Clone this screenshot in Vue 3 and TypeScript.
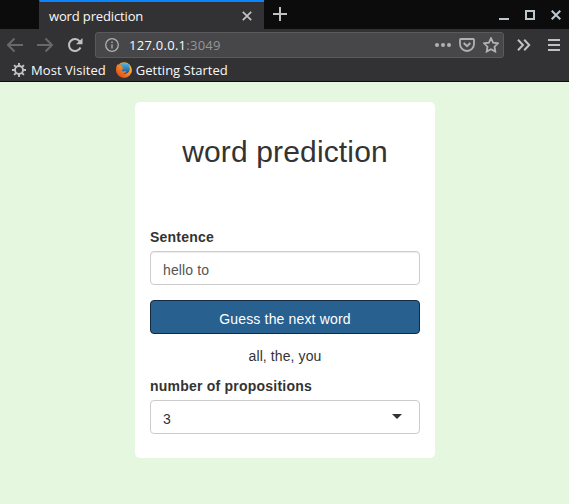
<script setup lang="ts">
import { ref } from 'vue'

const title = 'word prediction'
const sentence = ref('hello to')
const predictions = ref(['all', 'the', 'you'])
const count = ref(3)
</script>

<template>
  <div class="window">
    <header class="chrome">
      <div class="tabbar">
        <div class="tab">
          <span class="tab-title">{{ title }}</span>
          <svg class="tab-close" width="10" height="10" viewBox="0 0 10 10"><path d="M.8.8 9.2 9.2M9.2.8.8 9.2" /></svg>
        </div>
        <svg class="new-tab" width="14" height="14" viewBox="0 0 14 14"><path d="M7 0v14M0 7h14" /></svg>
        <div class="controls">
          <svg width="10" height="10" viewBox="0 0 10 10"><path d="M0 9h10" /></svg>
          <svg width="10" height="10" viewBox="0 0 10 10"><path d="M1 1h8v8H1z" /></svg>
          <svg width="10" height="10" viewBox="0 0 10 10"><path d="M.7.7 9.3 9.3M9.3.7.7 9.3" /></svg>
        </div>
      </div>
      <div class="toolbar">
        <svg class="nav dim" width="16" height="16" viewBox="0 0 16 16"><path d="M16 8H1M7.500 1.500 1 8l6.500 6.500" /></svg>
        <svg class="nav dim forward" width="16" height="16" viewBox="0 0 16 16"><path d="M0 8h15M8.500 1.500 15 8l-6.500 6.500" /></svg>
        <svg class="nav reload" width="16" height="16" viewBox="0 0 16 16">
          <path d="M12.700 4.300A6 6 0 1 0 13.500 10.500" /><path class="solid" d="M15.500 1v6.200H9z" />
        </svg>
        <div class="urlbar">
          <svg class="info" width="14" height="14" viewBox="0 0 14 14">
            <circle cx="7" cy="7" r="6.300" /><path d="M7 6.200v4.300M7 3.400v1.700" />
          </svg>
          <span class="url">127.0.0.1<span class="port">:3049</span></span>
          <svg class="dots" width="16" height="4" viewBox="0 0 16 4"><circle cx="2" cy="2" r="2" /><circle cx="8" cy="2" r="2" /><circle cx="14" cy="2" r="2" /></svg>
          <svg class="pocket" width="16" height="14" viewBox="0 0 16 14"><path d="M1.800 1h12.400q.8 0 .8.800V6a7 7 0 0 1-14 0V1.800Q1 1 1.800 1z" /><path class="thick" d="m4.700 5 3.300 3.200L11.300 5" /></svg>
          <svg class="star" width="16" height="16" viewBox="0 0 16 16"><path d="m8 1.200 2.100 4.400 4.900.7-3.500 3.400.8 4.900L8 12.300l-4.300 2.300.8-4.900L1 6.300l4.900-.7z" /></svg>
        </div>
        <svg class="overflow" width="14" height="12" viewBox="0 0 14 12"><path d="m1 .8 5 5.200-5 5.200M7.200.8l5 5.200-5 5.200" /></svg>
        <svg class="menu" width="12" height="12" viewBox="0 0 12 12"><path d="M0 1h12M0 6h12M0 11h12" /></svg>
      </div>
      <div class="bookmarks">
        <svg class="gear" width="14" height="14" viewBox="0 0 14 14">
          <circle cx="7" cy="7" r="4" />
          <path d="M7 0v3M7 11v3M0 7h3M11 7h3M2.050 2.050l2.100 2.100M9.850 9.850l2.100 2.100M2.050 11.950l2.100-2.100M9.850 4.150l2.100-2.100" />
        </svg>
        <span class="most">Most Visited</span>
        <svg class="firefox" width="16" height="16" viewBox="0 0 16 16">
          <defs>
            <linearGradient id="flame" x1="1" y1="0" x2="0" y2="1"><stop offset="0" stop-color="#ffd64a" /><stop offset=".45" stop-color="#f58a22" /><stop offset="1" stop-color="#d93620" /></linearGradient>
            <linearGradient id="globe" x1="0" y1="0" x2="0" y2="1"><stop offset="0" stop-color="#56b9e9" /><stop offset="1" stop-color="#174f93" /></linearGradient>
          </defs>
          <circle cx="8" cy="8" r="7.700" fill="url(#flame)" />
          <circle cx="8.700" cy="6.300" r="5.600" fill="url(#globe)" />
          <path d="M1.200 2.300 3.500 4q1.500-.6 3 .3L5.800 6l1.700.5-2 1.600q.8 2 3 1.100l2 .1q-1.300 2.500-4.500 1.700 4.800 2.500 7.300-1.500 1.300-3-.6-6.500Q17 6 15.200 10.900 12 16.500 6 15.300-1.500 12.500.4 5z" fill="url(#flame)" />
        </svg>
        <span class="started">Getting Started</span>
      </div>
    </header>

    <main class="page">
      <form class="card" @submit.prevent>
        <h2>{{ title }}</h2>
        <label class="short" for="sentence">Sentence</label>
        <input id="sentence" v-model="sentence" class="control" type="text" />
        <button class="guess" type="submit">Guess the next word</button>
        <div class="result">{{ predictions.join(', ') }}</div>
        <label>number of propositions</label>
        <div class="control select"><span>{{ count }}</span><i class="caret"></i></div>
      </form>
    </main>
  </div>
</template>

<style>
body {
  margin: 0;
  overflow: hidden;
}
</style>

<style scoped>
* {
  box-sizing: border-box;
}
.window {
  width: 569px;
  height: 504px;
  display: flex;
  flex-direction: column;
}
svg {
  display: block;
  flex: none;
  fill: none;
  stroke: #c1c1c2;
  stroke-width: 2;
}
.chrome {
  height: 82px;
  background: #323234;
  border-bottom: 1px solid #0c0c0d;
  color: #f9f9fa;
  font: 13px/18px "Open Sans", "Noto Sans", sans-serif;
  white-space: nowrap;
}
.tabbar {
  height: 29px;
  background: #0c0c0d;
  display: flex;
  padding-left: 39px;
}
.tab {
  width: 225px;
  height: 29px;
  display: flex;
  align-items: center;
  justify-content: space-between;
  padding: 0 12px 0 9px;
  border-top: 2px solid #0a84ff;
  border-left: 1px solid #343436;
  background: #323234;
}
.tab-title {
  letter-spacing: -0.14px;
}
.tab-close {
  margin-top: 1px;
  stroke-width: 1.800;
}
.new-tab {
  margin: 7px 0 0 9px;
}
.controls {
  display: flex;
  gap: 16px;
  margin: 10px 8px 0 auto;
}
.controls svg {
  stroke: #bcc8ce;
}
.toolbar {
  height: 32px;
  display: flex;
  align-items: center;
}
.nav {
  margin-left: 7px;
}
.dim {
  stroke: #68686a;
}
.forward {
  margin-left: 14px;
}
.reload {
  margin-left: 14px;
}
.solid {
  fill: #c1c1c2;
  stroke: none;
}
.urlbar {
  width: 409px;
  height: 26px;
  margin-left: 12px;
  padding: 0 4px 0 9px;
  display: flex;
  align-items: center;
  border: 1px solid #5a5a5c;
  border-radius: 3px;
  background: #474749;
}
.info {
  stroke-width: 1.300;
  stroke: #b1b1b3;
}
.url {
  margin-left: 10px;
  letter-spacing: 0.27px;
}
.port {
  color: #959597;
}
.dots {
  margin-left: auto;
  fill: #b1b1b3;
  stroke: none;
}
.pocket {
  margin-left: 8px;
  stroke-width: 1.800;
  stroke: #b1b1b3;
}
.thick {
  stroke-width: 2;
}
.star {
  margin-left: 8px;
  stroke-width: 1.800;
  stroke: #b1b1b3;
}
.overflow {
  margin-left: 13px;
}
.menu {
  margin-left: 17px;
}
.bookmarks {
  height: 18px;
  display: flex;
  align-items: center;
  padding-left: 12px;
}
.gear {
  stroke-width: 1.900;
}
.most {
  margin-left: 5px;
  letter-spacing: 0.06px;
}
.firefox {
  stroke: none;
  margin-left: 10px;
}
.started {
  margin-left: 4px;
}
.page {
  flex: 1;
  padding-top: 20px;
  background: #e5f8df;
  color: #333;
  font: 14px/20px "Liberation Sans", Arial, sans-serif;
}
.card {
  width: 300px;
  height: 356px;
  margin: 0 auto;
  padding: 33px 15px 24px;
  position: relative;
  left: 0.5px;
  border-radius: 5px;
  background: #fff;
}
h2 {
  margin: 0 0 59px;
  font-size: 30px;
  line-height: 33px;
  font-weight: 500;
  letter-spacing: 0.15px;
  text-align: center;
}
label {
  display: block;
  margin-bottom: 4px;
  font-weight: 700;
  letter-spacing: 0.22px;
}
.control {
  display: block;
  width: 100%;
  height: 34px;
  padding: 9px 12px 5px;
  border: 1px solid #ccc;
  border-radius: 4px;
  background: #fff;
  color: #555;
  font: inherit;
  letter-spacing: 0.12px;
  box-shadow: inset 0 1px 1px rgba(0, 0, 0, 0.075);
  outline: none;
}
.guess {
  display: block;
  width: 100%;
  height: 34px;
  margin: 15px 0 12px;
  padding: 8px 12px 4px;
  border: 1px solid #122b40;
  border-radius: 4px;
  background: #286090;
  color: #fff;
  font: inherit;
  letter-spacing: 0.16px;
}
.result {
  margin-bottom: 10px;
  letter-spacing: 0.1px;
  text-align: center;
}
.select {
  display: flex;
  align-items: center;
  justify-content: space-between;
  padding-right: 17px;
  color: #333;
  box-shadow: none;
}
.caret {
  margin-bottom: 5px;
  border: 5px solid transparent;
  border-top-color: #333;
  border-bottom: 0;
}
</style>
